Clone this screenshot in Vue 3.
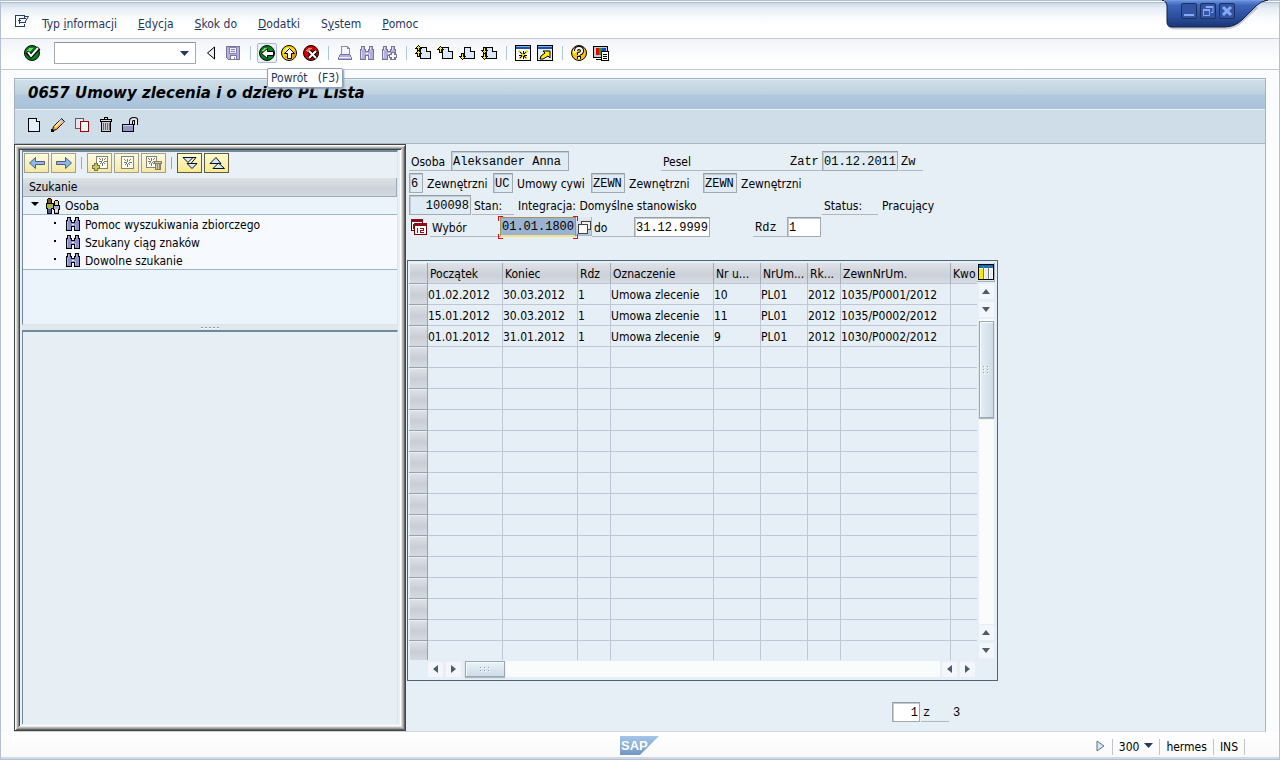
<script setup>
import { h, ref } from 'vue'

const page = '<path d="M2.5 1.5h8l3 3v10h-11z" fill="#e2f1fb" stroke="#000"/><path d="M10.5 1.5v3h3" fill="#fff" stroke="#000"/>'
const smallPage = '<path d="M5.5 2.5h6l4 4v7h-10v-7z" fill="#dbe7fa" stroke="#000"/><path d="M11.5 2.5v4h4" fill="#fff" stroke="#000"/>'
const arrowUp = (y) => `<path d="M3.5 ${y}l-3 3h2v3h2v-3h2z" fill="#ffee00" stroke="#000"/>`
const arrowDown = (y) => `<path d="M3.5 ${y}l-3-3h2v-3h2v3h2z" fill="#ffee00" stroke="#000"/>`
const binoc = (fill, line, shine) => `<path d="M2.5 1.5h3v3h1v2h3v-2h1v-3h3v3h1v10h-5v-4h-3v4h-5v-10h1z" fill="${fill}" stroke="${line}"/><path d="M3.5 2v3M2.500 6v7M11.500 2v3M10.500 9v4" stroke="${shine}"/><path d="M7 8.500h2" stroke="#fff"/>`
const disc = (fill, light) => `<circle cx="8" cy="8" r="7.500" shape-rendering="auto" fill="${fill}" stroke="#000"/><path d="M3 6q1-4 6-3l-4 5z" fill="${light}"/>`
const star = (x, y, c) => `<path d="M${x - 4} ${y}h3M${x + 1} ${y}h3M${x} ${y - 4}v3M${x} ${y + 1}v3M${x - 3} ${y - 3}l2 2M${x + 3} ${y - 3}l-2 2M${x - 3} ${y + 3}l2-2M${x + 3} ${y + 3}l-2-2" stroke="${c}" fill="none"/>`
const frame = '<path d="M2.5 1.5h12v12h-12z" fill="#fbfbef" stroke="#858579"/>'

const icons = {
  menu: '<path d="M10.5 5V2.500H1.500v11h9V11" fill="none" stroke="#243c66"/><path d="M5 10.500V5.500h7M5 9.500h7M4 7.500h3" fill="none" stroke="#243c66"/><path d="M11 3.500h3.500L11.500 8v1" fill="none" stroke="#243c66" shape-rendering="auto"/>',
  ok: disc('#00821c', '#76d65f') + '<path d="M3 7l4 4 8-8" fill="none" stroke="#000" stroke-width="4" shape-rendering="auto"/><path d="M4 7l3 4 7-8" fill="none" stroke="#fff" stroke-width="2" shape-rendering="auto"/>',
  prev: '<path d="M11.5 2v12l-7-6z" fill="#e8edf0" stroke="#000" shape-rendering="auto"/>',
  save: '<path d="M1.5 1.5h13v13h-11l-2-2z" fill="#b3b0dc" stroke="#77749f"/><path d="M4.5 2h7v6h-7z" fill="#eeeefb" stroke="#8985b2"/><path d="M5 10.5h6v4H5z" fill="#fff" stroke="#77749f"/><path d="M6 4.5h4M6 6.5h4M9.5 12v2" stroke="#8a87b4"/>',
  back: disc('#00821c', '#7ede5f') + '<path d="M2.5 8.500l6-5v3h6v4h-6v3z" fill="#fff" stroke="#000" shape-rendering="auto"/>',
  up: disc('#ffd400', '#fff79c') + '<path d="M14 6v6q-2 2-6 2l-5-2z" fill="#f39a00"/><path d="M8.500 3.500l5 5h-3v5h-4v-5h-3z" fill="#fff" stroke="#000" shape-rendering="auto"/>',
  cancel: disc('#d60000', '#ff7770') + '<path d="M6 6l7 7M13 6l-7 7" stroke="#000" stroke-width="4" shape-rendering="auto"/><path d="M6 6l7 7M13 6l-7 7" stroke="#fff" stroke-width="2" shape-rendering="auto"/>',
  print: '<path d="M4.5 9.5v-8h6l2 2v6" fill="#f3f4fc" stroke="#8b88b1"/><path d="M10.5 1.5v2h2" fill="none" stroke="#8b88b1"/><path d="M1.5 12.5l2-3h9l2 3v2h-13z" fill="#b3b0dc" stroke="#77749f"/><path d="M2 12.5h12" stroke="#eef"/>',
  find: binoc('#b3b0dc', '#77749f', '#dedcf2'),
  findNext: binoc('#b3b0dc', '#77749f', '#dedcf2') + '<path d="M8.5 9.5h2v-2h3v2h2v3h-2v2h-3v-2h-2z" fill="#f8f8ff" stroke="#77749f"/>',
  first: smallPage + arrowUp(0.5) + arrowUp(5.5),
  pgUp: smallPage + arrowUp(1.5),
  pgDown: smallPage + arrowDown(14.5),
  last: smallPage + arrowDown(8.5) + arrowDown(14.5),
  session: '<path d="M.5.5h15v15H.5z" fill="#fff" stroke="#000"/><path d="M1 1h14v3H1z" fill="#1955a8"/><path d="M1 1.5h14" stroke="#80b4e8"/><path d="M4 6l8 8M12 6l-8 8" stroke="#e6d400" stroke-width="2"/>' + star(8, 10, '#000'),
  shortcut: '<path d="M.5.5h15v15H.5z" fill="#e3ebf7" stroke="#000"/><path d="M1 1h14v3H1z" fill="#1955a8"/><path d="M1 1.5h14" stroke="#80b4e8"/><path d="M3 14l1-3 4-3-2-2h7v7l-2-2-5 3z" fill="#ffed00" stroke="#000" shape-rendering="auto"/>',
  help: '<circle cx="8" cy="8" r="7.5" fill="#ffc400" stroke="#000" shape-rendering="auto"/><path d="M2 6q2-6 8-4L3 9z" fill="#fff288"/><path d="M5 6q0-3 3-3t3 3q0 2-3 3v1M8 11v3" stroke="#000" stroke-width="4" fill="none" shape-rendering="auto"/><path d="M5 6q0-3 3-3t3 3q0 2-3 3v1M8 12v2" stroke="#fff" stroke-width="2" fill="none" shape-rendering="auto"/>',
  layout: '<path d="M.5 1.5h14v11H.5z" fill="#c5c9d1" stroke="#000"/><path d="M3 3h3v7H3z" fill="#e50000"/><path d="M6 3h3v7H6z" fill="#00b500"/><path d="M9 3h4v4H9z" fill="#1641df"/><path d="M3 14.5h6" stroke="#000"/><path d="M8.5 6.5h7v9h-7z" fill="#fff" stroke="#000"/><path d="M10 9.5h4M10 11.5h4M10 13.5h4" stroke="#000"/>',
  create: page,
  edit: '<path d="M2.5 13.5l1-4 8-8 3 3-8 8z" fill="#ffad32" stroke="#000" shape-rendering="auto"/><path d="M5 10l6-6" stroke="#ffe993" stroke-width="2" shape-rendering="auto"/><path d="M10 3l3 3" stroke="#c5c5dd" stroke-width="2" shape-rendering="auto"/><path d="M2 12v2h2" stroke="#000" fill="none" stroke-width="2"/>',
  copy: '<path d="M1.5 1.5h8v10h-8z" fill="#e4e7ee" stroke="#5b5b6c"/><path d="M6.5 4.5h8v10h-8z" fill="#eef8ff" stroke="#a00000"/>',
  trash: '<path d="M3.5 4.5h9v10h-9z" fill="#c6c8cb" stroke="#000"/><path d="M5.5 6v7M7.5 6v7M9.5 6v7M11.5 6v7" stroke="#666"/><path d="M2.500 2.5h11v2h-11zM6.5.5h3v2h-3z" fill="#d9dadc" stroke="#000"/>',
  unlock: '<path d="M9 7V4q0-2 3-2t2 2v4" stroke="#000" stroke-width="4" fill="none" shape-rendering="auto"/><path d="M9 7V4q0-2 3-2t2 2v4" stroke="#e4e4ea" stroke-width="2" fill="none" shape-rendering="auto"/><path d="M.5 7.5h11v7H.5z" fill="#9696c6" stroke="#000"/><path d="M1 8.5h10" stroke="#cfcfee"/>',
  left: '<path d="M.5 8l6-5.500v4h9v3h-9v4z" fill="#83b9eb" stroke="#4e6079" shape-rendering="auto"/><path d="M4 8h11" stroke="#acacf0"/>',
  right: '<path d="M15.500 8l-6-5.500v4h-9v3h9v4z" fill="#83b9eb" stroke="#4e6079" shape-rendering="auto"/><path d="M1 8h11" stroke="#acacf0"/>',
  addFav: '<path d="M4.5 1.5h11v12h-11z" fill="#fbfbef" stroke="#858579"/>' + star(10.5, 6.5, '#77776d') + '<path d="M.5 10.5h2v-2h3v2h2v3h-2v2h-3v-2h-2z" fill="#c8ce4e" stroke="#747451"/>',
  fav: frame + star(8.5, 7.5, '#77776d'),
  delFav: '<path d="M.5 1.5h10v11H.5z" fill="#fbfbef" stroke="#858579"/>' + star(5.5, 6.5, '#77776d') + '<path d="M9.5 8.5h5v6h-5zM8.5 6.5h7v2h-7z" fill="#d2ccab" stroke="#807b62"/><path d="M11.5 9v5M13 9v5" stroke="#918b74"/>',
  expand: '<path d="M1 2.5h10l-5 5zM5 8.5h10l-5 5z" fill="#d6e8ff" stroke="#07101e" shape-rendering="auto"/><path d="M11 2.500l3 0-5 6" fill="none" stroke="#07101e" shape-rendering="auto"/>',
  collapse: '<path d="M1 8.5l6-6 5 6zM4 13.5l5.500-5.500 6 5.500z" fill="#d6e8ff" stroke="#07101e" shape-rendering="auto"/>',
  people: '<circle cx="4.5" cy="3" r="2.5" fill="#86531c" stroke="#000"/><path d="M1 5.5h7v5H6.5v5h-4v-5H1z" fill="#a7b83a" stroke="#000"/><path d="M3 10.5h3v4H3z" fill="#4d5799"/><circle cx="11.5" cy="5" r="2.5" fill="#f1cd82" stroke="#000"/><path d="M8.5 7.5h6v4h-1v4h-4v-4h-1z" fill="#a9aee1" stroke="#000"/><path d="M10 11h3v3h-3z" fill="#ffe0a0"/>',
  binoculars: binoc('#8c90ce', '#000', '#b4b8e8'),
  dates: '<path d="M.5.5h11v11H.5z" fill="#fff" stroke="#600"/><path d="M0 0h12v3H0zM2 5h1v5H2z" fill="#870d18"/><path d="M3.5 4.5h12v11h-12z" fill="#fff" stroke="#700"/><path d="M3 4h13v3H3z" fill="#870d18"/><path d="M6.5 9v5M9 9.5h3.500v2H9.500v2H13" stroke="#8d1622" fill="none"/>',
  match: '<path d="M5.5 2.5h9v8h-9z" fill="#f2f2eb" stroke="#43433e"/><path d="M2.5 5.5h9v9h-9z" fill="#fff" stroke="#43433e"/>',
  config: '<path d="M.5.5h15v15H.5z" fill="#fff" stroke="#000"/><path d="M1 1h14v3H1z" fill="#1270bd"/><path d="M1 5h4v10H1z" fill="#ffe800"/><path d="M5.5 2v13M10.5 2v13" stroke="#777"/><path d="M7 5h3v10H7zM12 5h2v10h-2z" fill="#e6eef5"/>'
}
const Icon = (props) => h('svg', {
  viewBox: '0 0 16 16', width: 16, height: 16, class: 'ico', 'aria-hidden': 'true', innerHTML: icons[props.name]
})
Icon.props = ['name']

const menus = [['Typ ', 'i', 'nformacji'], ['', 'E', 'dycja'], ['', 'S', 'kok do'], ['', 'D', 'odatki'], ['S', 'y', 'stem'], ['', 'P', 'omoc']]
const toolGroups = [['prev', 'save'], ['back', 'up', 'cancel'], ['print', 'find', 'findNext'], ['first', 'pgUp', 'pgDown', 'last'], ['session', 'shortcut'], ['help', 'layout']]
const tip = 'Powrót   (F3)'
const appTools = ['create', 'edit', 'copy', 'trash', 'unlock']
const treeTools = [['left', 'right'], ['addFav', 'fav', 'delFav'], ['expand', 'collapse']]
const searches = ['Pomoc wyszukiwania zbiorczego', 'Szukany ciąg znaków', 'Dowolne szukanie']
const heads = ['Początek', 'Koniec', 'Rdz', 'Oznaczenie', 'Nr u...', 'NrUm...', 'Rk...', 'ZewnNrUm.', 'Kwo']
const records = [
  ['01.02.2012', '30.03.2012', '1', 'Umowa zlecenie', '10', 'PL01', '2012', '1035/P0001/2012', ''],
  ['15.01.2012', '30.03.2012', '1', 'Umowa zlecenie', '11', 'PL01', '2012', '1035/P0002/2012', ''],
  ['01.01.2012', '31.01.2012', '1', 'Umowa zlecenie', '9', 'PL01', '2012', '1030/P0002/2012', '']
]
const rows = [...records, ...Array.from({ length: 15 }, () => Array(9).fill(''))]

const command = ref('')
const from = ref('01.01.1800')
const to = ref('31.12.9999')
const kind = ref('1')
const position = ref('1')
</script>

<template>
  <div class="window">
    <header class="menubar">
      <button class="menu-icon" aria-label="Menu"><Icon name="menu" /></button>
      <nav class="menus">
        <button v-for="m in menus" :key="m[1] + m[2]">{{ m[0] }}<u>{{ m[1] }}</u>{{ m[2] }}</button>
      </nav>
      <div class="wintab">
        <svg class="tabshape" viewBox="0 0 108 32" width="108" height="32" aria-hidden="true">
          <defs>
            <linearGradient id="tabfill" x1="0" y1="0" x2="0" y2="1">
              <stop offset="0" stop-color="#6b95df" /><stop offset=".2" stop-color="#3d65b9" />
              <stop offset=".6" stop-color="#2c4f9d" /><stop offset="1" stop-color="#1c3677" />
            </linearGradient>
          </defs>
          <path d="M3 2q4 1 4 6v15q0 5 5 5h51q10 0 18-8l14-13" fill="none" stroke="#556" stroke-opacity=".3" stroke-width="3" />
          <path d="M0 0q5 1 5 6v16q0 5 5 5h53q10 0 18-8L94 6q5-5 12-6z" fill="url(#tabfill)" stroke="#11204a" />
          <path d="M2 .5h100" stroke="#7099e2" />
        </svg>
        <div class="winbtns">
          <button aria-label="Minimalizuj"><svg viewBox="0 0 14 14" width="14" height="14"><path d="M2 11h10" stroke="#86a9f5" stroke-width="2" /></svg></button>
          <button aria-label="Przywróć"><svg viewBox="0 0 14 14" width="14" height="14"><path d="M5 3.500V2.500h7v6h-2" fill="none" stroke="#86a9f5" /><path d="M5 3h7M2 6h7" stroke="#86a9f5" stroke-width="2" /><path d="M2.500 6v5.500h6V6" fill="none" stroke="#86a9f5" /></svg></button>
          <button aria-label="Zamknij"><svg viewBox="0 0 14 14" width="14" height="14"><path d="M3 3l8 8M11 3l-8 8" stroke="#86a9f5" stroke-width="3" /></svg></button>
        </div>
      </div>
    </header>

    <div class="toolbar">
      <button class="tool" aria-label="Zatwierdź"><Icon name="ok" /></button>
      <div class="combo">
        <input v-model="command" aria-label="Polecenie" />
        <button aria-label="Historia"><svg viewBox="0 0 9 5" width="9" height="5"><path d="M0 0h9L4.500 5z" fill="#26395c" /></svg></button>
      </div>
      <template v-for="(g, gi) in toolGroups" :key="gi">
        <i v-if="gi" class="sep"></i>
        <button v-for="t in g" :key="t" class="tool" :class="{ hot: t === 'back' }" :aria-label="t">
          <Icon :name="t" />
          <span v-if="t === 'back'" class="tip">{{ tip }}</span>
        </button>
      </template>
    </div>

    <main class="screen">
      <h1>0657 Umowy zlecenia i o dzieło PL Lista</h1>
      <div class="apptools">
        <button v-for="t in appTools" :key="t" :aria-label="t"><Icon :name="t" /></button>
      </div>

      <div class="work">
        <aside class="side">
          <div class="side-in">
            <section class="tree">
              <div class="treetools">
                <template v-for="(g, gi) in treeTools" :key="gi">
                  <i v-if="gi" class="tsep"></i>
                  <button v-for="t in g" :key="t" :class="{ on: gi === 2 }" :aria-label="t"><Icon :name="t" /></button>
                </template>
              </div>
              <div class="treehead">Szukanie</div>
              <div class="node root">
                <svg class="twist" viewBox="0 0 8 4" width="8" height="4"><path d="M0 0h8L4 4z" /></svg>
                <Icon name="people" /><span>Osoba</span>
              </div>
              <div class="leaves">
                <div v-for="s in searches" :key="s" class="node leaf"><i class="dot"></i><Icon name="binoculars" /><span>{{ s }}</span></div>
              </div>
            </section>
            <div class="splitter"><i v-for="n in 5" :key="n"></i></div>
            <section class="lower"></section>
          </div>
        </aside>

        <section class="detail">
          <form class="form" @submit.prevent>
            <div class="frow">
              <label class="lab w42" for="osoba">Osoba</label>
              <input id="osoba" class="w118" readonly value="Aleksander Anna" />
              <span class="lab pesel">Pesel</span>
              <label class="lab mono w34" for="zatr">Zatr</label>
              <input id="zatr" class="w76" readonly value="01.12.2011" />
              <span class="lab mono w24 ml1">Zw</span>
            </div>
            <div class="frow">
              <input class="w14" readonly value="6" aria-label="Grupa" />
              <span class="out w70">Zewnętrzni</span>
              <input class="w20" readonly value="UC" aria-label="Podgrupa" />
              <span class="out w78">Umowy cywi</span>
              <input class="w34" readonly value="ZEWN" aria-label="Jednostka" />
              <span class="out w78">Zewnętrzni</span>
              <input class="w34" readonly value="ZEWN" aria-label="Obszar" />
              <span class="out">Zewnętrzni</span>
            </div>
            <div class="frow">
              <input class="w62 num" readonly value="100098" aria-label="Numer" />
              <span class="lab w42 ml1">Stan:</span>
              <span class="out position">Integracja: Domyślne stanowisko</span>
              <span class="lab w56">Status:</span>
              <span class="out">Pracujący</span>
            </div>
            <div class="frow">
              <button type="button" class="datebtn" aria-label="Okres"><Icon name="dates" /></button>
              <label class="lab w70" for="from">Wybór</label>
              <span class="focus"><input id="from" v-model="from" class="w76 edit" /><b></b></span>
              <button type="button" class="matchbtn" aria-label="Wyszukaj"><Icon name="match" /></button>
              <label class="lab w42" for="to">do</label>
              <input id="to" v-model="to" class="w76 edit" />
              <label class="lab mono w34 rdz" for="kind">Rdz</label>
              <input id="kind" v-model="kind" class="w34 edit" />
            </div>
          </form>

          <div class="gridbox">
            <div class="tablewrap">
              <table>
                <colgroup><col class="c0" /><col v-for="(_, i) in heads" :key="i" :class="'c' + (i + 1)" /></colgroup>
                <thead><tr><th class="sel"></th><th v-for="t in heads" :key="t">{{ t }}</th></tr></thead>
                <tbody>
                  <tr v-for="(r, ri) in rows" :key="ri"><td class="sel"></td><td v-for="(c, ci) in r" :key="ci">{{ c }}</td></tr>
                </tbody>
              </table>
            </div>
            <div class="vbar">
              <button class="config" aria-label="Konfiguracja"><Icon name="config" /></button>
              <button class="arr" aria-label="W górę"><svg viewBox="0 0 8 5" width="8" height="5"><path d="M0 5h8L4 0z" /></svg></button>
              <button class="arr" aria-label="W dół"><svg viewBox="0 0 8 5" width="8" height="5"><path d="M0 0h8L4 5z" /></svg></button>
              <div class="track"><div class="thumb v"><i v-for="n in 6" :key="n"></i></div></div>
              <button class="arr" aria-label="Strona w górę"><svg viewBox="0 0 8 5" width="8" height="5"><path d="M0 5h8L4 0z" /></svg></button>
              <button class="arr" aria-label="Strona w dół"><svg viewBox="0 0 8 5" width="8" height="5"><path d="M0 0h8L4 5z" /></svg></button>
            </div>
            <div class="hbar">
              <button class="arr" aria-label="W lewo"><svg viewBox="0 0 5 8" width="5" height="8"><path d="M5 0v8L0 4z" /></svg></button>
              <button class="arr" aria-label="W prawo"><svg viewBox="0 0 5 8" width="5" height="8"><path d="M0 0v8l5-4z" /></svg></button>
              <div class="track"><div class="thumb h"><i v-for="n in 6" :key="n"></i></div></div>
              <button class="arr" aria-label="Kolumna w lewo"><svg viewBox="0 0 5 8" width="5" height="8"><path d="M5 0v8L0 4z" /></svg></button>
              <button class="arr" aria-label="Kolumna w prawo"><svg viewBox="0 0 5 8" width="5" height="8"><path d="M0 0v8l5-4z" /></svg></button>
            </div>
          </div>

          <div class="frow pager">
            <input id="pos" v-model="position" class="w28 edit num" />
            <label class="lab mono w28 ml1" for="pos">z</label>
            <span class="out mono">3</span>
          </div>
        </section>
      </div>
    </main>

    <footer class="status">
      <svg class="logo" viewBox="0 0 39 19" width="39" height="19" role="img" aria-label="SAP">
        <defs><linearGradient id="sapfill" x1="0" y1="0" x2="0" y2="1"><stop offset="0" stop-color="#a5c6e9" /><stop offset="1" stop-color="#7297c3" /></linearGradient></defs>
        <path d="M0 0h39L20 19H0z" fill="url(#sapfill)" />
        <text x="1" y="14" class="logotext">SAP</text>
      </svg>
      <div class="cells">
        <button class="play" aria-label="Pokaż"><svg viewBox="0 0 9 12" width="9" height="12"><path d="M1 1v10l7-5z" fill="#d7e6f4" stroke="#59728c" /></svg></button>
        <button class="cell">300<svg viewBox="0 0 9 5" width="9" height="5"><path d="M0 0h9L4.500 5z" fill="#26395c" /></svg></button>
        <span class="cell">hermes</span>
        <span class="cell last">INS</span>
      </div>
    </footer>
  </div>
</template>

<style>
body { margin: 0; background: #fff; }
.ico { display: block; flex: none; shape-rendering: crispEdges; overflow: visible; }
</style>

<style scoped>
* { box-sizing: border-box; }
.window {
  min-height: 100vh; display: flex; flex-direction: column; border: 1px solid #b4c1d4; border-top: 3px double #aebdd2;
  background: #fbfcfd; color: #000; font: 12px/16px "DejaVu Sans Condensed", "DejaVu Sans", sans-serif;
}
button { font: inherit; color: inherit; border: 0; background: none; padding: 0; margin: 0; display: flex; align-items: center; justify-content: center; }
input { font: 12px/16px "Liberation Mono", monospace; margin: 0; border-radius: 0; outline: 0; min-width: 0; color: #000; }

.menubar { position: relative; height: 36px; display: flex; align-items: center; padding: 6px 0 0 13px; border-bottom: 1px solid #c5cad5; background: linear-gradient(#cddae9, #e9eff5 6px, #f8fafc 14px, #fff 22px); }
.menu-icon { width: 16px; height: 16px; margin: 0 12px 6px 0; }
.menus { display: flex; gap: 21px; color: #24375c; }
.menus button { white-space: pre; }
.wintab { position: absolute; right: 9px; top: -3px; width: 108px; height: 32px; }
.tabshape { display: block; }
.winbtns { position: absolute; left: 19px; top: 3px; display: flex; gap: 3px; }
.winbtns button { width: 16px; height: 16px; border: 1px solid #1b2f60; border-radius: 2px; background: #3254a2; }

.toolbar { height: 31px; display: flex; align-items: center; padding: 0 0 2px 20px; border-bottom: 1px solid #c5cad5; background: linear-gradient(#f1f4f8, #fdfefe 20px, #fff); }
.tool { position: relative; width: 22px; height: 22px; }
.hot::before { content: ""; position: absolute; inset: 1px; border: 1px solid #a9bbd4; border-radius: 2px; background: #eaf0f7; z-index: 0; }
.hot .ico { position: relative; z-index: 1; }
.sep { width: 12px; height: 14px; background: linear-gradient(#abc6dd, #abc6dd) center / 1px 100% no-repeat; }
.combo { display: flex; width: 142px; height: 22px; margin: 0 4px 0 11px; border: 1px solid #a3aab3; border-top-color: #8c939c; border-radius: 1px; background: #fff; }
.combo input { flex: 1; border: 0; background: none; }
.combo button { width: 22px; }
.tip { position: absolute; left: 11px; top: 26px; z-index: 5; padding: 0 3px; border: 1px solid #8d9fb9; border-radius: 2px; background: #fff; color: #24375c; white-space: pre; box-shadow: 1px 1px 2px #8a9aac; line-height: 18px; }

.screen { flex: 1; display: flex; flex-direction: column; margin: 8px 13px 0; border: 1px solid #a3b1c3; border-bottom-color: #ccd5de; box-shadow: inset -1px 0 #e9f1f7; background: #e7eff6; }
h1 { margin: 0; height: 31px; padding: 0 0 3px 13px; font: italic bold 15px/26px "DejaVu Sans", sans-serif; border-top: 1px solid #e4eef5; border-bottom: 1px solid #eaf1f6; background: linear-gradient(#cfdfe9, #bfd2df 48%, #b0c8dd 52%, #abc3da); }
.apptools { height: 34px; display: flex; align-items: center; padding: 0 0 3px 7px; border-bottom: 1px solid #a9b7c5; background: #cfdde8; }
.apptools button { width: 24px; height: 24px; }
.work { flex: 1; display: flex; }

.side {
  width: 392px; flex: none; display: flex; padding: 6px; background: #e9f0f5; margin-left: -1px;
  box-shadow: inset 1px 1px #444, inset -1px -1px #444, inset 2px 2px #f8f8f5, inset -2px -2px #666, inset 3px 3px #dcdcd9, inset -3px -3px #999, inset 4px 4px #b4b4b1, inset -4px -4px #bbb, inset 5px 5px #888, inset -5px -5px #e4e4e2, inset 6px 6px #3f4448, inset -6px -6px #fff;
}
.side-in { flex: 1; display: flex; flex-direction: column; padding: 0 2px 1px; }
.tree { height: 175px; border: solid #6f8a9d; border-width: 2px 1px 1px; border-right-color: #dbe5ed; border-bottom-color: #dbe5ed; background: #ebf3fb; }
.treetools { display: flex; gap: 2px; height: 26px; padding: 1px; background: #e9f0f6; }
.treetools button { width: 25px; height: 20px; border: 1px solid #a5a187; background: linear-gradient(#fefae2, #f8eeb8 70%, #f3e6a5); }
.treetools .on { border-color: #5e5a42; background: linear-gradient(#fffbd0, #fbe98e); }
.tsep { width: 7px; height: 12px; margin: 4px 0; background: linear-gradient(#9da7b0, #9da7b0) center / 1px 100% no-repeat; }
.treehead { height: 19px; padding-left: 6px; border: solid #9aabba; border-width: 0 1px 1px 0; background: linear-gradient(#dde2e6, #cdd2d9 60%, #d4d9df); line-height: 19px; }
.node { display: flex; align-items: center; height: 18px; }
.node span { margin-left: 4px; line-height: 18px; padding-top: 1px; }
.root { padding-left: 8px; border-bottom: 1px solid #9bb5c9; }
.twist { margin: 0 6px 4px 0; }
.leaves { background: #f6faff; border-bottom: 1px solid #9bb5c9; }
.leaf { padding-left: 31px; }
.dot { width: 2px; height: 2px; margin: 0 9px 2px 0; background: #000; }
.splitter { height: 5px; display: flex; align-items: center; justify-content: center; gap: 2px; background: #e1e8ec; }
.splitter i { width: 2px; height: 2px; background: #8c9dad; border-bottom: 1px solid #fff; }
.lower { flex: 1; border: solid #6f8a9d; border-width: 2px 1px 0; border-right-color: #dbe5ed; background: #e7eff5; }

.detail { flex: 1; min-width: 0; padding-top: 7px; }
.form { padding-left: 3px; }
.frow { display: flex; height: 22px; align-items: flex-start; }
.frow input { height: 20px; padding: 1px 1px 0; border: 1px solid #a3aaaf; border-top-color: #949b9f; box-shadow: inset 1px 1px #c3ccd2; background: #dfebf5; text-align: left; flex: none; }
.frow input.edit { background: #fff; }
.frow input.num { text-align: right; }
.lab { height: 20px; padding: 3px 0 0 2px; border-bottom: 1px solid #b3b8bc; white-space: nowrap; flex: none; }
.out { height: 20px; padding: 3px 0 0 4px; white-space: nowrap; flex: none; }
.mono { font-family: "Liberation Mono", monospace; }
.w14 { width: 14px; } .w20 { width: 20px; } .w24 { width: 24px; } .w28 { width: 28px; } .w34 { width: 34px; }
.w42 { width: 42px; } .w56 { width: 56px; } .w62 { width: 62px; } .w70 { width: 70px; } .w76 { width: 76px; }
.w78 { width: 78px; } .w118 { width: 118px; }
.ml1 { margin-left: 1px; }
.pesel { width: 127px; margin-left: 92px; }
.position { width: 308px; }
.rdz { margin-left: 43px; }
.datebtn { width: 21px; height: 20px; padding-right: 2px; }
.focus { position: relative; flex: none; width: 76px; height: 20px; }
.frow .focus input { padding-top: 0; border-color: #a4935c; border-bottom: 2px solid #f5e18c; background: #99b3d1; box-shadow: none; }
.focus b { position: absolute; inset: -1px -2px -2px; pointer-events: none;
  background: linear-gradient(#e10b17, #e10b17) 0 0 / 5px 1px, linear-gradient(#e10b17, #e10b17) 0 0 / 1px 5px, linear-gradient(#e10b17, #e10b17) 100% 0 / 5px 1px, linear-gradient(#e10b17, #e10b17) 100% 0 / 1px 5px, linear-gradient(#e10b17, #e10b17) 0 100% / 5px 1px, linear-gradient(#e10b17, #e10b17) 0 100% / 1px 5px, linear-gradient(#e10b17, #e10b17) 100% 100% / 5px 1px, linear-gradient(#e10b17, #e10b17) 100% 100% / 1px 5px;
  background-repeat: no-repeat; }
.matchbtn { width: 16px; height: 19px; background: linear-gradient(#e5ebf2, #b5c3da); box-shadow: inset -1px -1px #a9b5c6; }

.gridbox { width: 591px; margin: 21px 0 0 1px; padding: 2px 2px 2px 1px; border: 1px solid #4d6577; display: grid; grid-template-columns: 568px 1fr; grid-template-rows: 397px 18px; }
.tablewrap { overflow: hidden; }
table { border-collapse: separate; border-spacing: 0; table-layout: fixed; width: 568px; }
.c0 { width: 19px; } .c1, .c2 { width: 75px; } .c3 { width: 33px; } .c4 { width: 103px; } .c5 { width: 47px; } .c6 { width: 47px; } .c7 { width: 33px; } .c8 { width: 110px; } .c9 { width: 26px; }
th, td { padding: 0; height: 21px; white-space: nowrap; overflow: hidden; border: solid #bfc6d5; border-width: 0 1px 1px 0; text-align: left; font-weight: normal; line-height: 18px; padding-top: 2px; }
th { padding-left: 2px; border-right-color: #a2adba; background: linear-gradient(#dfe3e8, #cbd0d9 60%, #d8dce2); }
th:last-child, td:last-child { border-right: 0; }
td.sel, th.sel { border-color: #95a2b4; background: linear-gradient(#dfe2e7, #c9cdd6 55%, #d6dae0); box-shadow: inset 1px 1px #eceff2; }
tbody tr:last-child td { border-bottom: 0; }
tbody tr:last-child td.sel { border-bottom: 1px solid #95a2b4; }

.vbar { display: flex; flex-direction: column; align-items: center; }
.config { width: 18px; height: 19px; margin-bottom: 1px; border: solid #a7b0b9; border-width: 0 1px 1px 0; background: #dfe4e9; }
.arr { width: 15px; height: 15px; margin: 1px 0 2px; background: #f3f6fa; flex: none; }
.arr path { fill: #4a5d6d; }
.vbar .track { width: 15px; padding-top: 2px; }
.track { flex: 1; background: #fafbfb; }
.thumb { display: grid; align-content: center; justify-content: center; gap: 2px; border: 1px solid #97a9b8; box-shadow: 0 1px 1px #aeb8c0, inset 1px 1px #f5fafd; background: linear-gradient(90deg, #e6eff6, #cddbe6); }
.thumb i { width: 1px; height: 1px; background: #94a3b1; box-shadow: 1px 1px #fff; }
.thumb.v { height: 97px; grid-template-columns: repeat(2, 2px); }
.thumb.h { width: 40px; height: 16px; grid-template-columns: repeat(3, 2px); background: linear-gradient(#e9f2f8, #cedce6); }
.hbar { display: flex; align-items: center; padding: 0 0 0 18px; }
.hbar .arr { margin: 0 2px 0 1px; }
.hbar .track { height: 16px; margin: 0 1px 0 2px; }

.pager { padding: 0 0 0 486px; margin-top: 21px; }

.status { position: relative; height: 27px; display: flex; align-items: center; justify-content: flex-end; padding-top: 4px; border-bottom: 2px solid #d0d8e1; background: linear-gradient(#fff, #fafafa); }
.logo { position: absolute; left: calc(50% - 20px); top: 4px; }
.logotext { font: bold 13px "Liberation Sans", sans-serif; fill: #fff; }
.cells { display: flex; align-items: center; padding-right: 34px; }
.play { width: 14px; margin: 0 4px 2px 0; }
.cell { display: flex; align-items: center; gap: 5px; height: 16px; padding: 0 6px 0 6px; border-left: 1px solid #c0c5cb; }
.cell svg { margin-bottom: 3px; }
.last { border-right: 1px solid #c0c5cb; }
</style>
